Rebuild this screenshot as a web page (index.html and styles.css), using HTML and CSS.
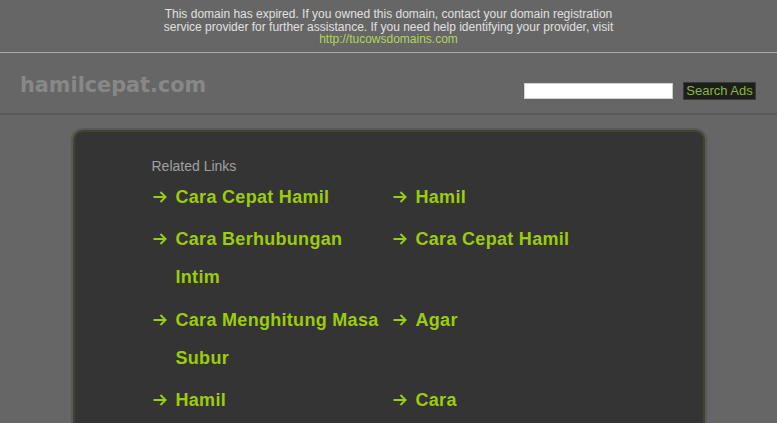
FILE: index.html
```html
<!DOCTYPE html>
<html lang="en">
<head>
<meta charset="utf-8">
<title>hamilcepat.com</title>
<link rel="stylesheet" href="styles.css">
</head>
<body>
<div class="notice">
  <p>This domain has expired. If you owned this domain, contact your domain registration<br>service provider for further assistance. If you need help identifying your provider, visit<br><a href="#">http://tucowsdomains.com</a></p>
</div>
<header class="header">
  <div class="logo">hamilcepat.com</div>
  <form class="search">
    <input class="search-input" type="text">
    <button class="search-btn" type="button">Search Ads</button>
  </form>
</header>
<main class="box">
  <h2 class="related">Related Links</h2>
  <ul class="links">
    <li><svg class="arr" viewBox="0 0 14 12"><path d="M0.5 6H12.5M7.5 1L12.5 6L7.5 11"/></svg><a href="#">Cara Cepat Hamil</a></li>
    <li><svg class="arr" viewBox="0 0 14 12"><path d="M0.5 6H12.5M7.5 1L12.5 6L7.5 11"/></svg><a href="#">Hamil</a></li>
    <li><svg class="arr" viewBox="0 0 14 12"><path d="M0.5 6H12.5M7.5 1L12.5 6L7.5 11"/></svg><a href="#">Cara Berhubungan Intim</a></li>
    <li><svg class="arr" viewBox="0 0 14 12"><path d="M0.5 6H12.5M7.5 1L12.5 6L7.5 11"/></svg><a href="#">Cara Cepat Hamil</a></li>
    <li><svg class="arr" viewBox="0 0 14 12"><path d="M0.5 6H12.5M7.5 1L12.5 6L7.5 11"/></svg><a href="#">Cara Menghitung Masa Subur</a></li>
    <li><svg class="arr" viewBox="0 0 14 12"><path d="M0.5 6H12.5M7.5 1L12.5 6L7.5 11"/></svg><a href="#">Agar</a></li>
    <li><svg class="arr" viewBox="0 0 14 12"><path d="M0.5 6H12.5M7.5 1L12.5 6L7.5 11"/></svg><a href="#">Hamil</a></li>
    <li><svg class="arr" viewBox="0 0 14 12"><path d="M0.5 6H12.5M7.5 1L12.5 6L7.5 11"/></svg><a href="#">Cara</a></li>
  </ul>
</main>
</body>
</html>
```

FILE: styles.css
```css
html, body {
  margin: 0;
  padding: 0;
  background: #666666;
  font-family: "Liberation Sans", Arial, sans-serif;
  overflow: hidden;
}

.notice {
  padding: 8px 0 6px;
  border-bottom: 1px solid #a9a9a9;
  text-align: center;
}

.notice p {
  margin: 0;
  font-size: 12px;
  line-height: 12.5px;
  letter-spacing: 0;
  color: #e0e0e0;
}

.notice a {
  color: #b3d45a;
  text-decoration: none;
}

.header {
  box-sizing: border-box;
  height: 62px;
  display: flex;
  align-items: flex-start;
  justify-content: space-between;
  padding: 0 21px 0 20px;
  border-bottom: 2px solid #5a5a5a;
}

.logo {
  font-family: "DejaVu Sans", Verdana, sans-serif;
  font-weight: bold;
  font-size: 20.8px;
  line-height: 24px;
  color: #888888;
  letter-spacing: 0;
  margin-top: 20px;
}

.search {
  display: flex;
  align-items: center;
  gap: 10px;
  margin-top: 29px;
}

.search-input {
  box-sizing: border-box;
  width: 149px;
  height: 16px;
  margin: 0;
  padding: 0;
  border: 1px solid #cfcfcf;
  background: #ffffff;
}

.search-btn {
  box-sizing: border-box;
  width: 73px;
  height: 18px;
  margin: 0;
  padding: 0;
  border: 1px solid #3a3a3a;
  background: #1c1f1c;
  color: #8db440;
  font-family: "Liberation Sans", Arial, sans-serif;
  font-size: 13px;
  line-height: 16px;
}

.box {
  box-sizing: border-box;
  width: 632px;
  margin: 15px auto 0;
  min-height: 400px;
  background: #343434;
  border: 2px solid #41442f;
  border-radius: 10px;
  box-shadow: 0 0 1px 2px #585858;
  padding: 25px 0 0 77px;
}

.related {
  margin: 0;
  font-size: 14px;
  font-weight: normal;
  line-height: 18px;
  color: #a0a0a0;
}

.links {
  list-style: none;
  margin: 3px 0 0;
  padding: 0;
  display: grid;
  grid-template-columns: 240px 240px;
  row-gap: 4.5px;
}

.links li {
  display: flex;
  align-items: flex-start;
  font-size: 18px;
  font-weight: bold;
  line-height: 38px;
  letter-spacing: 0.3px;
}

.arr {
  flex: none;
  width: 14px;
  height: 12px;
  margin: 13px 9px 0 1px;
  fill: none;
  stroke: #9ccc0a;
  stroke-width: 2;
}

.links a {
  color: #9ccc0a;
  text-decoration: none;
  padding-right: 12px;
}
```
